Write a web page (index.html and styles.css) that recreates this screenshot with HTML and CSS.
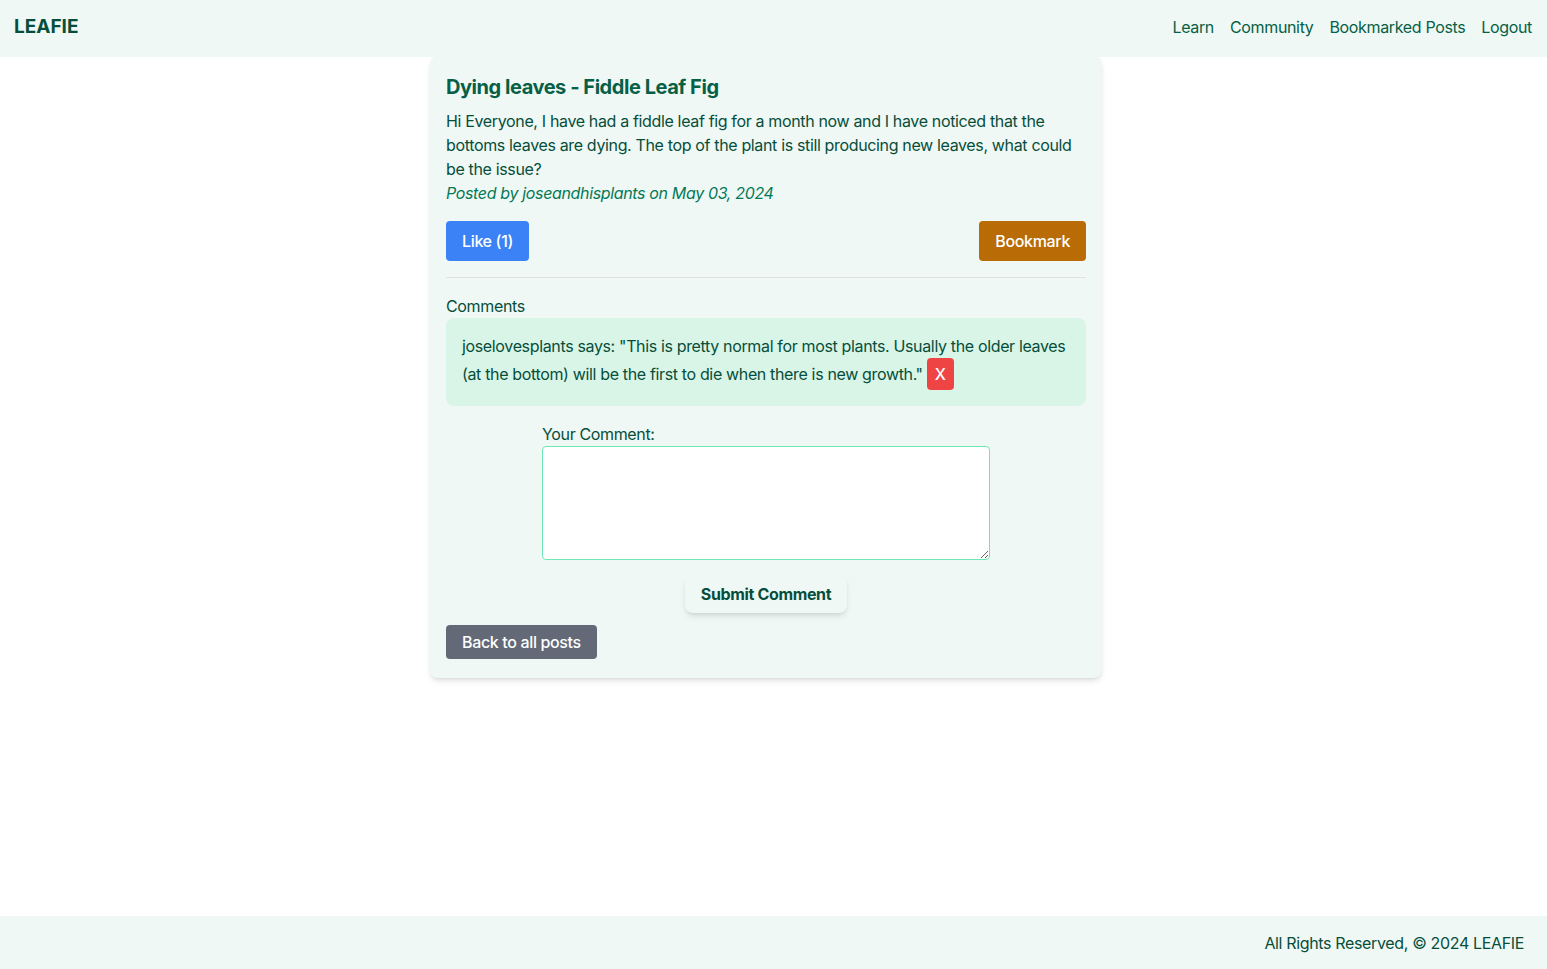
FILE: index.html
```html
<!DOCTYPE html>
<html lang="en">
<head>
<meta charset="utf-8">
<title>LEAFIE</title>
<link rel="stylesheet" href="styles.css">
</head>
<body>
<div class="page">
  <header class="header">
    <div class="logo">LEAFIE</div>
    <nav class="nav">
      <a href="#">Learn</a>
      <a href="#">Community</a>
      <a href="#">Bookmarked Posts</a>
      <a href="#">Logout</a>
    </nav>
  </header>
  <main class="main">
    <article class="card">
      <h1 class="title">Dying leaves - Fiddle Leaf Fig</h1>
      <p class="body">Hi Everyone, I have had a fiddle leaf fig for a month now and I have noticed that the bottoms leaves are dying. The top of the plant is still producing new leaves, what could be the issue?</p>
      <p class="meta">Posted by joseandhisplants on May 03, 2024</p>
      <div class="actions">
        <button class="btn btn-like">Like (1)</button>
        <button class="btn btn-bookmark">Bookmark</button>
      </div>
      <hr class="divider">
      <div class="comments-label">Comments</div>
      <div class="comment">joselovesplants says: "This is pretty normal for most plants. Usually the older leaves (at the bottom) will be the first to die when there is new growth." <button class="btn-x">X</button></div>
      <form class="comment-form">
        <label class="form-label" for="c">Your Comment:</label>
        <textarea id="c" class="textarea"></textarea>
        <button type="button" class="btn-submit">Submit Comment</button>
      </form>
      <button class="btn btn-back">Back to all posts</button>
    </article>
  </main>
  <footer class="footer">All Rights Reserved, © 2024 LEAFIE</footer>
</div>
</body>
</html>
```

FILE: styles.css
```css
* { box-sizing: border-box; }
html, body { margin: 0; padding: 0; }
body {
  font-family: Inter, "Noto Sans", sans-serif;
  font-size: 16px;
  line-height: 24px;
  letter-spacing: -0.35px;
  color: #065f46;
  background: #ffffff;
}
.page {
  min-height: 969px;
  display: flex;
  flex-direction: column;
}
.header {
  height: 57px;
  background: #eff8f4;
  display: flex;
  align-items: center;
  justify-content: space-between;
  padding: 0 15px 3px 14px;
}
.logo {
  font-size: 19px;
  font-weight: 700;
  color: #064e3b;
  letter-spacing: 0;
}
.nav {
  display: flex;
  gap: 16px;
}
.nav a {
  color: #065f46;
  text-decoration: none;
  font-size: 16px;
}
.main {
  flex: 1;
  display: flex;
  justify-content: center;
  align-items: flex-start;
  padding-right: 15px;
}
.card {
  width: 672px;
  background: #eff8f4;
  border-radius: 8px;
  box-shadow: 0 4px 6px -1px rgba(0,0,0,0.1), 0 2px 4px -2px rgba(0,0,0,0.1);
  padding: 17px 16px 19px;
  margin-top: -1px;
}
.title {
  margin: 0 0 8px;
  font-size: 20px;
  line-height: 28px;
  font-weight: 700;
  color: #065f46;
  letter-spacing: -0.45px;
}
.body {
  margin: 0;
  color: #064e3b;
}
.meta {
  margin: 0;
  font-style: italic;
  color: #047857;
}
.actions {
  display: flex;
  justify-content: space-between;
  margin-top: 16px;
}
.btn {
  font-family: inherit;
  font-size: 16px;
  line-height: 24px;
  letter-spacing: -0.35px;
  border: none;
  border-radius: 4px;
  color: #ffffff;
  cursor: pointer;
}
.btn-like {
  background: #3b82f6;
  padding: 8px 16px;
  font-weight: 500;
}
.btn-bookmark {
  background: #b96b06;
  padding: 8px 16px;
  font-weight: 500;
}
.divider {
  border: none;
  border-top: 1px solid #dde3e0;
  margin: 16px 0 16px;
}
.comments-label {
  color: #064e3b;
}
.comment {
  background: #d9f5e7;
  border-radius: 8px;
  padding: 16px;
  color: #064e3b;
}
.btn-x {
  font-family: inherit;
  font-size: 16px;
  line-height: 24px;
  background: #ef4444;
  color: #ffffff;
  border: none;
  border-radius: 4px;
  padding: 4px 8px;
  font-weight: 500;
  vertical-align: baseline;
}
.comment-form {
  width: 448px;
  margin: 16px auto 0;
  display: flex;
  flex-direction: column;
}
.form-label {
  color: #064e3b;
}
.textarea {
  width: 448px;
  height: 114px;
  border: 1px solid #6ee7b7;
  border-radius: 4px;
  background: #ffffff;
  font-family: inherit;
  font-size: 16px;
  resize: vertical;
}
.btn-submit {
  align-self: center;
  margin-top: 15px;
  font-family: inherit;
  font-size: 16px;
  line-height: 24px;
  letter-spacing: -0.35px;
  font-weight: 700;
  color: #064e3b;
  background: #eff8f4;
  border: none;
  border-radius: 8px;
  padding: 7px 16px;
  box-shadow: 0 4px 6px -1px rgba(0,0,0,0.1), 0 2px 4px -2px rgba(0,0,0,0.1);
}
.btn-back {
  display: block;
  margin-top: 12px;
  background: #636977;
  padding: 5px 16px;
  font-weight: 500;
}
.footer {
  height: 53px;
  background: #eff8f4;
  display: flex;
  align-items: center;
  justify-content: flex-end;
  padding: 0 23px 0 0;
  color: #064e3b;
  margin-top: auto;
}
```
